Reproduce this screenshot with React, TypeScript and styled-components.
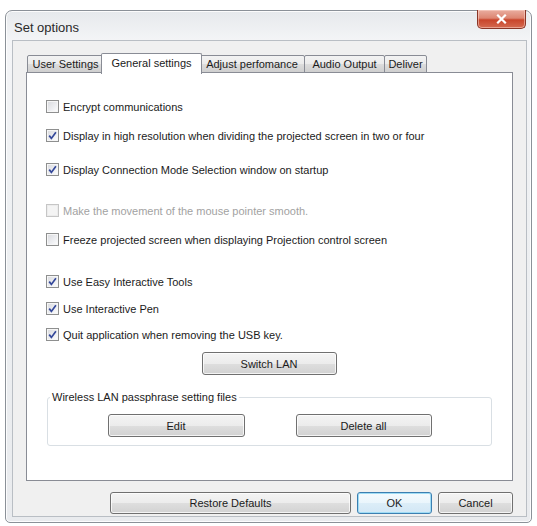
import React from 'react';
import styled, { createGlobalStyle } from 'styled-components';

const GlobalStyle = createGlobalStyle`
  html, body {
    margin: 0;
    padding: 0;
    background: #ffffff;
  }
  body {
    font-family: "Liberation Sans", Arial, sans-serif;
    font-size: 11px;
    color: #1b1b1b;
  }
`;

const Page = styled.div`
  padding: 10px 5px 3px 5px;
`;

const Window = styled.div`
  width: 527px;
  height: 513px;
  box-sizing: border-box;
  border: 1px solid #8b9198;
  border-radius: 7px 7px 5px 5px;
  background: linear-gradient(180deg, #e6e9ec 0%, #f4f5f7 6%, #eef0f2 40%, #e9ebee 100%);
  box-shadow: inset 0 0 0 1px rgba(255, 255, 255, 0.85);
  display: flex;
  flex-direction: column;
  padding: 0 4px 5px 6px;
`;

const TitleBar = styled.div`
  height: 29px;
  display: flex;
  align-items: flex-start;
  justify-content: space-between;
`;

const Title = styled.span`
  margin: 9px 0 0 2px;
  font-size: 13px;
  color: #2a2a2a;
`;

const CloseButton = styled.div`
  width: 49px;
  height: 19px;
  box-sizing: border-box;
  margin: -1px 1px 0 0;
  border: 1px solid #8a3526;
  border-top: none;
  border-radius: 0 0 5px 5px;
  background: linear-gradient(180deg, #e9ad9f 0%, #dd8672 45%, #c9452b 55%, #d56a50 100%);
  box-shadow: inset 0 0 0 1px rgba(255, 220, 210, 0.5);
  display: flex;
  align-items: center;
  justify-content: center;
`;

const Client = styled.div`
  flex: 1;
  background: #f0f0f0;
  border: 1px solid #b9bec4;
  padding: 12px 13px 0 13px;
  display: flex;
  flex-direction: column;
`;

const TabStrip = styled.div`
  height: 20px;
  display: flex;
  align-items: flex-end;
  padding-left: 1px;
  position: relative;
  z-index: 1;
`;

const Tab = styled.div<{ $width: number; $active?: boolean }>`
  box-sizing: border-box;
  width: ${({ $width, $active }) => ($active ? $width + 4 : $width)}px;
  height: ${({ $active }) => ($active ? 21 : 18)}px;
  margin: ${({ $active }) => ($active ? '0 -2px -1px -3px' : '0 0 0 -1px')};
  border: 1px solid #898c95;
  border-bottom: ${({ $active }) => ($active ? 'none' : '1px solid #898c95')};
  border-radius: 2px 2px 0 0;
  background: ${({ $active }) =>
    $active
      ? '#ffffff'
      : 'linear-gradient(180deg, #f3f3f3 0%, #ebebeb 50%, #dddddd 51%, #cfcfcf 100%)'};
  position: relative;
  z-index: ${({ $active }) => ($active ? 2 : 1)};
  display: flex;
  align-items: ${({ $active }) => ($active ? 'flex-start' : 'center')};
  padding-top: ${({ $active }) => ($active ? 3 : 0)}px;
  justify-content: center;
  white-space: nowrap;
  font-size: 11px;

  &:first-child {
    margin-left: ${({ $active }) => ($active ? '-2px' : '0')};
  }
`;

const Panel = styled.div`
  box-sizing: border-box;
  height: 409px;
  margin-top: -1px;
  background: #ffffff;
  border: 1px solid #898c95;
  padding: 0 20px 0 19px;
  display: flex;
  flex-direction: column;
`;

const Row = styled.label<{ $space: number; $disabled?: boolean }>`
  display: flex;
  align-items: center;
  height: 15px;
  margin-top: ${({ $space }) => $space}px;
  color: ${({ $disabled }) => ($disabled ? '#a2a2a2' : '#1b1b1b')};
  white-space: nowrap;
`;

const Box = styled.span<{ $disabled?: boolean }>`
  width: 13px;
  height: 13px;
  box-sizing: border-box;
  flex-shrink: 0;
  margin-right: 4px;
  border: 1px solid ${({ $disabled }) => ($disabled ? '#c6c6c6' : '#8e8f8f')};
  background: ${({ $disabled }) =>
    $disabled ? '#f4f4f4' : 'linear-gradient(135deg, #d8d9dd 0%, #eeeff2 60%, #ffffff 100%)'};
  box-shadow: inset 0 0 0 1px ${({ $disabled }) => ($disabled ? '#ececec' : '#f6f6f6')};
  display: flex;
  align-items: center;
  justify-content: center;
`;

const CenterRow = styled.div<{ $space: number; $gap?: number }>`
  display: flex;
  justify-content: center;
  gap: ${({ $gap }) => $gap ?? 0}px;
  margin-top: ${({ $space }) => $space}px;
`;

const Button = styled.button<{ $width: number; $default?: boolean }>`
  width: ${({ $width }) => $width}px;
  height: 23px;
  box-sizing: border-box;
  padding: 0;
  border: 1px solid ${({ $default }) => ($default ? '#3c7fb1' : '#707070')};
  border-radius: 3px;
  background: ${({ $default }) =>
    $default
      ? 'linear-gradient(180deg, #f4fafe 0%, #eaf5fc 50%, #dcedf8 51%, #d2e7f5 100%)'
      : 'linear-gradient(180deg, #f4f4f4 0%, #ececec 50%, #dedede 51%, #d2d2d2 100%)'};
  box-shadow: inset 0 0 0 1px
    ${({ $default }) => ($default ? '#9fdcf5' : 'rgba(255, 255, 255, 0.75)')};
  font-family: "Liberation Sans", Arial, sans-serif;
  font-size: 11px;
  color: #1b1b1b;
`;

const Group = styled.fieldset`
  margin: 16px 0 0 1px;
  padding: 0 0 8px 0;
  border: 1px solid #d9dfe4;
  border-radius: 3px;
`;

const GroupLabel = styled.legend`
  margin-left: 2px;
  padding: 0 2px;
  font-size: 11px;
  line-height: 13px;
`;

const Footer = styled.div`
  display: flex;
  justify-content: flex-end;
  gap: 6px;
  margin-top: 11px;

  & > button {
    height: 22px;
  }
`;

const CheckMark = () => (
  <svg width="9" height="9" viewBox="0 0 9 9">
    <path d="M1.2 4.6 L3.4 7.4 L7.9 1.2" fill="none" stroke="#34489a" strokeWidth="1.7" />
  </svg>
);

const CloseGlyph = () => (
  <svg width="11" height="10" viewBox="0 0 11 10">
    <path d="M2 1.5 L9 8.5 M9 1.5 L2 8.5" stroke="#ffffff" strokeWidth="2.2" strokeLinecap="square" />
  </svg>
);

type Option = { text: string; checked: boolean; space: number; disabled?: boolean };

const options: Option[] = [
  { text: 'Encrypt communications', checked: false, space: 26 },
  { text: 'Display in high resolution when dividing the projected screen in two or four', checked: true, space: 14 },
  { text: 'Display Connection Mode Selection window on startup', checked: true, space: 19 },
  { text: 'Make the movement of the mouse pointer smooth.', checked: false, space: 26, disabled: true },
  { text: 'Freeze projected screen when displaying Projection control screen', checked: false, space: 14 },
  { text: 'Use Easy Interactive Tools', checked: true, space: 27 },
  { text: 'Use Interactive Pen', checked: true, space: 12 },
  { text: 'Quit application when removing the USB key.', checked: true, space: 11 },
];

const tabs = [
  { label: 'User Settings', width: 77 },
  { label: 'General settings', width: 97, active: true },
  { label: 'Adjust perfomance', width: 106 },
  { label: 'Audio Output', width: 81 },
  { label: 'Deliver', width: 43 },
];

const App: React.FC = () => (
  <Page>
    <GlobalStyle />
    <Window>
      <TitleBar>
        <Title>Set options</Title>
        <CloseButton>
          <CloseGlyph />
        </CloseButton>
      </TitleBar>
      <Client>
        <TabStrip>
          {tabs.map((t) => (
            <Tab key={t.label} $width={t.width} $active={t.active}>
              {t.label}
            </Tab>
          ))}
        </TabStrip>
        <Panel>
          {options.map((o) => (
            <Row key={o.text} $space={o.space} $disabled={o.disabled}>
              <Box $disabled={o.disabled}>{o.checked && <CheckMark />}</Box>
              {o.text}
            </Row>
          ))}
          <CenterRow $space={10}>
            <Button $width={135}>Switch LAN</Button>
          </CenterRow>
          <Group>
            <GroupLabel>Wireless LAN passphrase setting files</GroupLabel>
            <CenterRow $space={10} $gap={51}>
              <Button $width={137}>Edit</Button>
              <Button $width={136}>Delete all</Button>
            </CenterRow>
          </Group>
        </Panel>
        <Footer>
          <Button $width={241}>Restore Defaults</Button>
          <Button $width={75} $default>
            OK
          </Button>
          <Button $width={75}>Cancel</Button>
        </Footer>
      </Client>
    </Window>
  </Page>
);

export default App;
